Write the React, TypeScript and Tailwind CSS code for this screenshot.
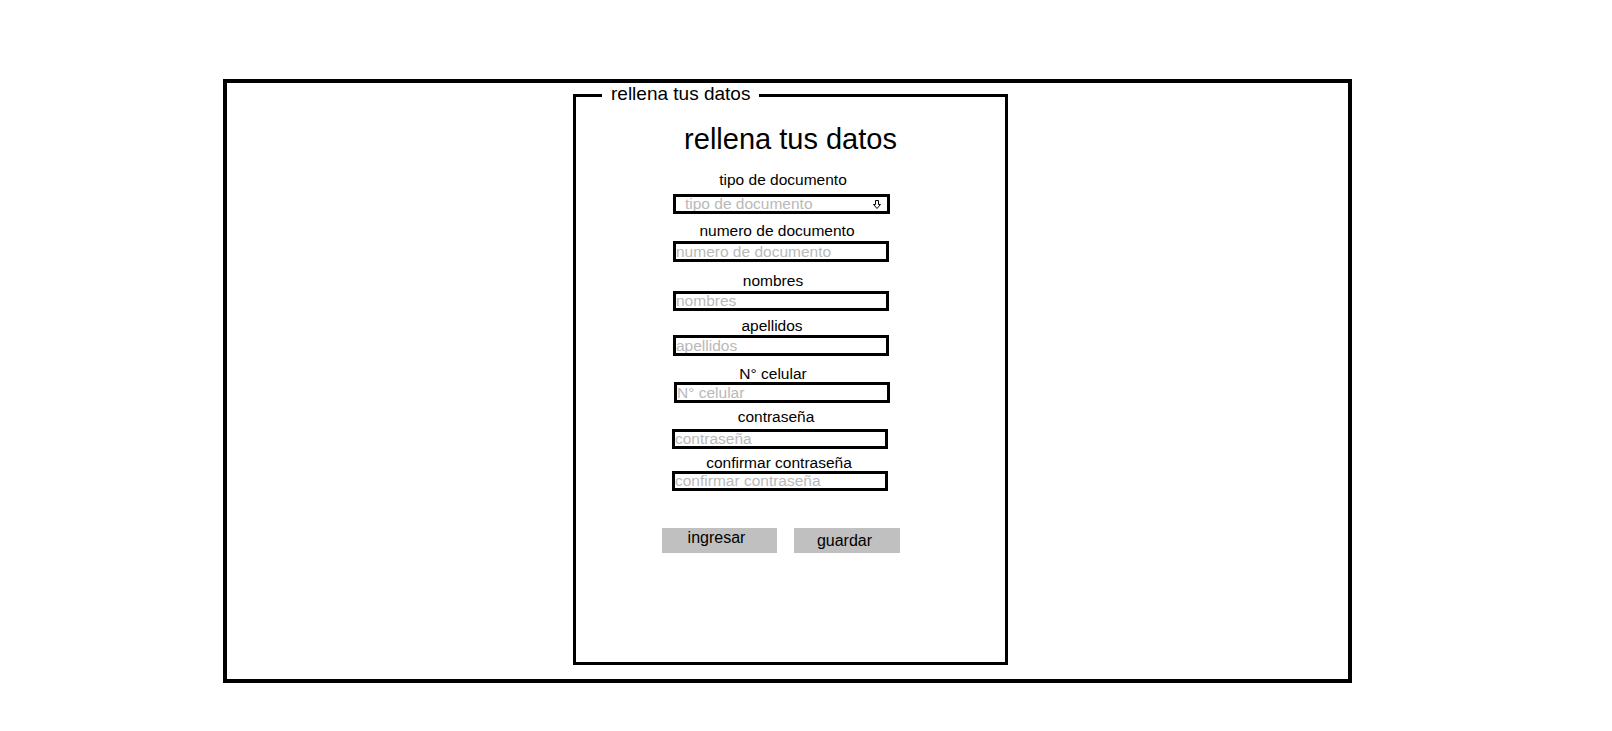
import React from 'react';

interface Field {
  label: string;
  labelMt: number;
  labelDx: number;
  inputMt: number;
  inputH: number;
  inputDx: number;
  type?: string;
}

const fields: Field[] = [
  { label: 'numero de documento', labelMt: 9, labelDx: -4, inputMt: 2, inputH: 21, inputDx: 0 },
  { label: 'nombres', labelMt: 11, labelDx: -8, inputMt: 2, inputH: 20, inputDx: 0 },
  { label: 'apellidos', labelMt: 7, labelDx: -9, inputMt: 1, inputH: 21, inputDx: 0 },
  { label: 'N° celular', labelMt: 10, labelDx: -8, inputMt: 0, inputH: 21, inputDx: 1 },
  { label: 'contraseña', labelMt: 6, labelDx: -5, inputMt: 4, inputH: 20, inputDx: -1, type: 'password' },
  { label: 'confirmar contraseña', labelMt: 6, labelDx: -2, inputMt: 0, inputH: 20, inputDx: -1, type: 'password' },
];

const DownArrow = () => (
  <svg width="10" height="11" viewBox="0 0 10 11" className="absolute right-[8px] top-[5px] pointer-events-none">
    <polygon points="3.5,1.5 6.5,1.5 6.5,5.5 8.5,5.5 5,9.5 1.5,5.5 3.5,5.5" fill="none" stroke="#000" strokeWidth="1" />
  </svg>
);

const App: React.FC = () => {
  return (
    <div className="min-h-screen bg-white pt-[79px] pl-[223px] font-['Liberation_Sans',Arial,sans-serif] text-black">
      <div className="w-[1129px] h-[604px] border-4 border-black">
        <fieldset className="ml-[346px] w-[435px] h-[582px] border-[3px] border-black">
          <legend className="ml-[26px] pl-[9px] pr-[9px] pb-[2px] text-[19px] leading-[22px]">rellena tus datos</legend>

          <h2 className="mt-[15px] text-center text-[29px] leading-[34px]">rellena tus datos</h2>

          {/* Fields */}
          <div className="pl-[97px]">
            <div className="mt-[16px] w-[216px] ml-[2px] text-center text-[15.5px] leading-[16px]">tipo de documento</div>
            <div className="relative mt-[6px] w-[217px] h-[20px]">
              <select
                defaultValue=""
                className="block appearance-none w-full h-full border-[3px] border-black bg-white pl-[9px] text-[15.5px] leading-[14px] text-[#b9b9b9] outline-none"
              >
                <option value="" disabled>tipo de documento</option>
                <option value="cc">cedula de ciudadania</option>
                <option value="ti">tarjeta de identidad</option>
              </select>
              <DownArrow />
            </div>

            {fields.map((f) => (
              <div key={f.label}>
                <div
                  className="w-[216px] text-center text-[15.5px] leading-[16px]"
                  style={{ marginTop: f.labelMt, marginLeft: f.labelDx }}
                >
                  {f.label}
                </div>
                <input
                  type={f.type ?? 'text'}
                  placeholder={f.label}
                  className="block w-[216px] border-[3px] border-black p-0 text-[15.5px] leading-[14px] placeholder:text-[#b9b9b9] outline-none"
                  style={{ marginTop: f.inputMt, marginLeft: f.inputDx, height: f.inputH }}
                />
              </div>
            ))}
          </div>

          {/* Buttons */}
          <div className="mt-[37px] pl-[86px] flex gap-[17px]">
            <button className="w-[115px] h-[25px] bg-[#c0c0c0] text-[16px] leading-[18px] pb-[6px] pr-[6px]">ingresar</button>
            <button className="w-[106px] h-[25px] bg-[#c0c0c0] text-[16px] leading-[18px] pt-[1px] pr-[5px]">guardar</button>
          </div>
        </fieldset>
      </div>
    </div>
  );
};

export default App;
